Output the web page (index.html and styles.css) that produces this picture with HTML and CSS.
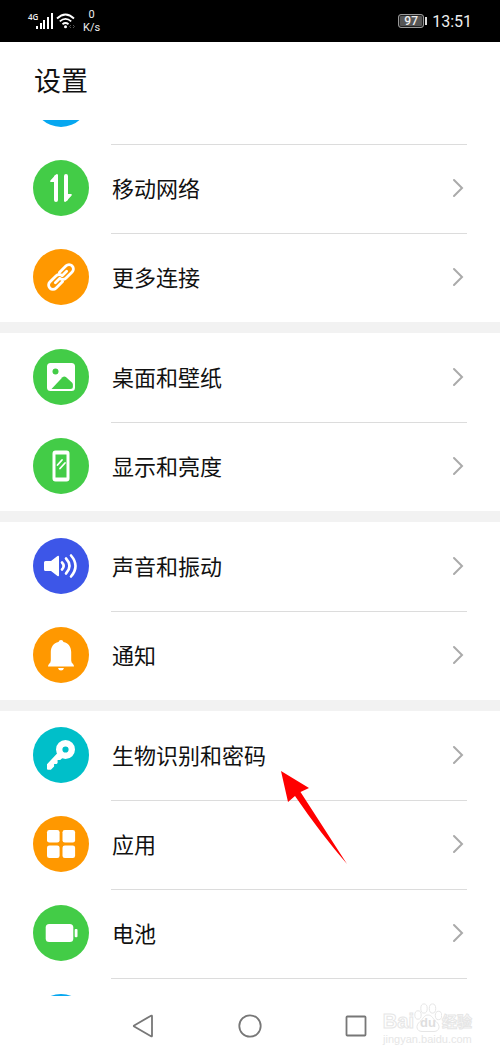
FILE: index.html
```html
<!DOCTYPE html>
<html lang="zh-CN">
<head>
<meta charset="utf-8">
<meta name="viewport" content="width=device-width, initial-scale=1">
<title>设置</title>
<link rel="stylesheet" href="styles.css">
</head>
<body>
<div class="screen">
  <header class="status">
    <div class="status-side">
      <div class="signal">
        <span class="network">4G</span>
        <svg width="18" height="18" viewBox="0 0 18 18" fill="#fff"><rect x="0" y="14" width="2" height="3"/><rect x="4" y="11" width="2" height="6"/><rect x="7" y="8" width="2" height="9"/><rect x="11" y="5" width="2" height="12"/><rect x="15" y="1" width="2" height="16"/></svg>
      </div>
      <svg class="wifi" width="20" height="18" viewBox="0 0 20 18" fill="none" stroke="#fff" stroke-width="1.8"><path d="M1 6.5Q9.500-1.500 18 6.500M3.800 9.400Q9.500 4.300 15.200 9.400M6.500 12.300Q9.500 9.800 12.500 12.300"/><circle cx="9.500" cy="14.700" r="1.500" fill="#fff" stroke="none"/><path d="M15 13l-1.500 1.500L15 16M17 13l1.500 1.500L17 16" stroke="#555" stroke-width="1"/></svg>
      <div class="speed"><span>0</span><span>K/s</span></div>
    </div>
    <div class="status-side">
      <div class="battery"><span class="level">97</span><span class="nub"></span></div>
      <time class="clock">13:51</time>
    </div>
  </header>

  <h1 class="title">设置</h1>

  <main class="list">
    <section class="group group-first">
      <div class="row">
        <svg class="icon blue" viewBox="0 0 56 56"></svg>
        <span class="body"></span>
      </div>
      <button class="row">
        <svg class="icon green" viewBox="0 0 56 56"><g fill="none" stroke="#fff" stroke-width="4" stroke-linecap="round"><path d="M23 17v23M33 16v23"/></g><path d="M25 15v7h-7.200q-1.300-.5-.4-1.600l5.500-5.900q1.500-1 2.100.5zM31 41v-7h7q1.500.4.600 1.600l-5.500 5.900q-1.500 1-2.100-.5z" fill="#fff"/></svg>
        <span class="body"><span class="label">移动网络</span><svg class="chevron" viewBox="0 0 12 20"><path d="M2 2l8 8-8 8"/></svg></span>
      </button>
      <button class="row">
        <svg class="icon orange" viewBox="0 0 56 56"><g transform="translate(28 28) rotate(-45)" fill="none" stroke="#fff" stroke-width="2.800" stroke-linecap="round" stroke-linejoin="round"><path d="M-2 4.300h-9.500a4.200 4.200 0 0 1-4.200-4.200v-.2a4.200 4.200 0 0 1 4.200-4.200h9a4.200 4.200 0 0 1 4.200 4.300M2 -4.300h9.500a4.200 4.200 0 0 1 4.200 4.200v.2a4.200 4.200 0 0 1-4.200 4.200h-9a4.200 4.200 0 0 1-4.200-4.300M-8 0h6M8 0h-6"/></g></svg>
        <span class="body"><span class="label">更多连接</span><svg class="chevron" viewBox="0 0 12 20"><path d="M2 2l8 8-8 8"/></svg></span>
      </button>
    </section>

    <section class="group">
      <button class="row">
        <svg class="icon green" viewBox="0 0 56 56"><rect x="14" y="14" width="28" height="28" rx="3.500" fill="#fff"/><circle cx="22.500" cy="22.500" r="3" fill="#43cc47"/><path d="M18.500 40 29.500 28.300q1.700-1.700 3.400-.2l6 5.500q1 1 1 2.200v1.700q0 2.500-2.500 2.500z" fill="#43cc47"/></svg>
        <span class="body"><span class="label">桌面和壁纸</span><svg class="chevron" viewBox="0 0 12 20"><path d="M2 2l8 8-8 8"/></svg></span>
      </button>
      <button class="row">
        <svg class="icon green" viewBox="0 0 56 56"><path fill="#fff" fill-rule="evenodd" d="M22.500 12.500h11a3 3 0 0 1 3 3v25a3 3 0 0 1-3 3h-11a3 3 0 0 1-3-3v-25a3 3 0 0 1 3-3zM22.500 16.500v23h11v-23z"/><path d="M24.500 27l4.500-5M27 30.500l5-5.500" stroke="#fff" stroke-width="1.800" stroke-linecap="round"/></svg>
        <span class="body"><span class="label">显示和亮度</span><svg class="chevron" viewBox="0 0 12 20"><path d="M2 2l8 8-8 8"/></svg></span>
      </button>
    </section>

    <section class="group">
      <button class="row">
        <svg class="icon indigo" viewBox="0 0 56 56"><path fill="#fff" d="M12.500 23H18l6.500-5q1.500-.8 1.500.7v18.600q0 1.500-1.500.7L18 33h-5.500q-1.500 0-1.500-1.500v-7q0-1.500 1.500-1.500z"/><g fill="none" stroke="#fff" stroke-width="2.600" stroke-linecap="round"><path d="M29 24.500q3.300 3.500 0 7M33 20.500q7 7.500 0 15M38 17.500q9 10.500 0 21"/></g></svg>
        <span class="body"><span class="label">声音和振动</span><svg class="chevron" viewBox="0 0 12 20"><path d="M2 2l8 8-8 8"/></svg></span>
      </button>
      <button class="row">
        <svg class="icon orange" viewBox="0 0 56 56"><path fill="#fff" d="M28 13q2 0 2.500 2c5 1.200 7.700 5 7.700 10v8.500q0 2 1.800 3.500 1 1 1 2.500H15q0-1.500 1-2.500 1.800-1.500 1.800-3.500V25c0-5 2.700-8.800 7.700-10q.5-2 2.500-2zM25 41h6q-.6 2.500-3 2.500T25 41z"/></svg>
        <span class="body"><span class="label">通知</span><svg class="chevron" viewBox="0 0 12 20"><path d="M2 2l8 8-8 8"/></svg></span>
      </button>
    </section>

    <section class="group">
      <button class="row">
        <svg class="icon teal" viewBox="0 0 56 56"><circle cx="32.500" cy="22.500" r="6.300" fill="none" stroke="#fff" stroke-width="6.400"/><path d="M25 25.500l5 5-2.800 2.500h-2.600v2.900l-1 1h-2.500v2.600l-3.200 3.300H15q-1 0-1-1v-4.600z" fill="#fff"/></svg>
        <span class="body"><span class="label">生物识别和密码</span><svg class="chevron" viewBox="0 0 12 20"><path d="M2 2l8 8-8 8"/></svg></span>
        <svg class="pointer" viewBox="0 0 66 93"><path fill="#f00" d="M0 0l28 17-8.500 4L66 93Q40 63 14 25l-7 6z"/></svg>
      </button>
      <button class="row">
        <svg class="icon orange" viewBox="0 0 56 56"><g fill="#fff"><rect x="14" y="14" width="12.600" height="12.600" rx="2.300"/><rect x="29.500" y="14" width="12.600" height="12.600" rx="2.300"/><rect x="14" y="29.500" width="12.600" height="12.600" rx="2.300"/><rect x="29.500" y="29.500" width="12.600" height="12.600" rx="2.300"/></g></svg>
        <span class="body"><span class="label">应用</span><svg class="chevron" viewBox="0 0 12 20"><path d="M2 2l8 8-8 8"/></svg></span>
      </button>
      <button class="row">
        <svg class="icon green" viewBox="0 0 56 56"><rect x="12.700" y="19" width="27.600" height="18" rx="3.500" fill="#fff"/><rect x="41.700" y="24" width="2.800" height="8.300" rx="1" fill="#fff"/></svg>
        <span class="body"><span class="label">电池</span><svg class="chevron" viewBox="0 0 12 20"><path d="M2 2l8 8-8 8"/></svg></span>
      </button>
      <div class="row">
        <svg class="icon blue" viewBox="0 0 56 56"></svg>
        <span class="body"></span>
      </div>
    </section>
  </main>

  <nav class="nav">
    <button aria-label="返回"><svg viewBox="0 0 24 24"><path d="M21 2.200v19.600q0 1-1 .5L3.200 12.600q-.9-.6 0-1.200L20 1.700q1-.5 1 .5z"/></svg></button>
    <button aria-label="主页"><svg viewBox="0 0 24 24"><circle cx="12" cy="12" r="10.700"/></svg></button>
    <button aria-label="最近任务"><svg viewBox="0 0 24 24"><rect x="1.500" y="2.500" width="19" height="19" rx=".8"/></svg></button>
  </nav>

  <div class="watermark">
    <div class="brand">
      <span class="bai">Bai</span>
      <span class="paw">
        <svg viewBox="0 0 28 30"><ellipse cx="4" cy="12" rx="3.200" ry="4.200"/><ellipse cx="10" cy="5.500" rx="3.200" ry="4.600"/><ellipse cx="18.500" cy="5.500" rx="3.200" ry="4.600"/><ellipse cx="24.500" cy="12.500" rx="3.200" ry="4.200"/><path d="M14 12c4 0 5 4 8 6.500 5 4 3.500 10-2 10H8c-5.500 0-7-6-2-10C9 16 10 12 14 12z"/></svg>
        <span class="du">du</span>
      </span>
      <span class="jingyan">经验</span>
    </div>
    <div class="site">jingyan.baidu.com</div>
  </div>
</div>
</body>
</html>
```
FILE: styles.css
```css
* {
  box-sizing: border-box;
}

body {
  margin: 0;
  background: #fff;
  color: #111;
  font-family: "Noto Sans CJK SC", sans-serif;
}

button {
  border: 0;
  padding: 0;
  background: none;
  color: inherit;
  font: inherit;
  text-align: left;
}

.screen {
  position: relative;
  display: flex;
  flex-direction: column;
  height: 100vh;
  overflow: hidden;
}

.status {
  display: flex;
  flex: none;
  align-items: center;
  justify-content: space-between;
  height: 42px;
  padding: 0 28px;
  background: #000;
  color: #eee;
  font-family: Roboto, sans-serif;
}

.status-side {
  display: flex;
  align-items: center;
}

.signal {
  display: flex;
  align-items: flex-start;
}

.network {
  width: 8px;
  font-family: "Open Sans", sans-serif;
  font-size: 8px;
  font-weight: 600;
  line-height: 10px;
}

.wifi {
  margin-left: 2px;
}

.speed {
  display: flex;
  flex-direction: column;
  align-items: center;
  margin-left: 7px;
  font-size: 11px;
  line-height: 13px;
}

.battery {
  display: flex;
  align-items: center;
  gap: 1px;
  margin-right: 5px;
}

.level {
  width: 26px;
  height: 14px;
  border: 1px solid #999;
  border-radius: 3px;
  background: #555;
  box-shadow: inset 0 0 0 1px #222;
  font-size: 12px;
  font-weight: 500;
  line-height: 13px;
  text-align: center;
}

.nub {
  width: 2px;
  height: 8px;
  background: #ddd;
}

.clock {
  font-size: 16px;
}

.title {
  flex: none;
  height: 78px;
  margin: 0;
  padding-left: 34px;
  font-size: 27px;
  font-weight: 400;
  line-height: 76px;
}

.list {
  flex: 1;
  min-height: 0;
  overflow: hidden;
}

.group + .group {
  border-top: 11px solid #f2f2f2;
}

.group-first {
  margin-top: -65px;
}

.row {
  position: relative;
  display: flex;
  align-items: center;
  gap: 22px;
  width: 100%;
  height: 89px;
  padding: 0 33px;
  font-size: 22px;
}

.icon {
  flex: none;
  width: 56px;
  height: 56px;
  margin-bottom: 1px;
  border-radius: 50%;
}

.green {
  background: #43cc47;
}

.orange {
  background: #ff9800;
}

.blue {
  background: #06a7f0;
}

.indigo {
  background: #3d56e8;
}

.teal {
  background: #00bfc9;
}

.body {
  display: flex;
  flex: 1;
  align-items: center;
  justify-content: space-between;
  align-self: stretch;
}

.row + .row .body {
  border-top: 1px solid #dcdcdc;
}

.label {
  padding: 0 0 4px 1px;
}

.chevron {
  width: 12px;
  height: 20px;
  margin: 0 3px 2px 0;
  fill: none;
  stroke: #aaa;
  stroke-width: 2;
  stroke-linecap: round;
}

.pointer {
  position: absolute;
  top: 60px;
  left: 281px;
  z-index: 1;
  width: 66px;
  height: 93px;
}

.nav {
  display: grid;
  flex: none;
  grid-template-columns: repeat(3, 1fr);
  height: 60px;
  padding: 0 90px;
}

.nav button {
  display: flex;
  align-items: center;
  justify-content: center;
}

.nav svg {
  width: 24px;
  height: 24px;
  fill: none;
  stroke: #777;
  stroke-width: 1.8;
}

.watermark {
  position: absolute;
  right: 28px;
  bottom: 11px;
  color: #fff;
  -webkit-text-stroke: 1px #e6e6e6;
}

.brand {
  display: flex;
  align-items: flex-end;
  height: 30px;
}

.bai {
  font-family: "Liberation Sans", sans-serif;
  font-size: 20px;
  font-weight: 700;
  line-height: 24px;
}

.paw {
  position: relative;
  width: 28px;
  height: 30px;
}

.paw svg {
  width: 28px;
  height: 30px;
  fill: #fff;
  stroke: #e6e6e6;
}

.du {
  position: absolute;
  right: 0;
  bottom: 3px;
  left: 0;
  color: #dedede;
  -webkit-text-stroke: 0;
  font-family: "Liberation Sans", sans-serif;
  font-size: 13px;
  font-weight: 700;
  line-height: 14px;
  text-align: center;
}

.jingyan {
  font-size: 15px;
  font-weight: 700;
  line-height: 24px;
}

.site {
  color: #e6e6e6;
  -webkit-text-stroke: 0;
  font-family: "Liberation Sans", sans-serif;
  font-size: 11px;
  line-height: 12px;
  text-align: center;
}
```
